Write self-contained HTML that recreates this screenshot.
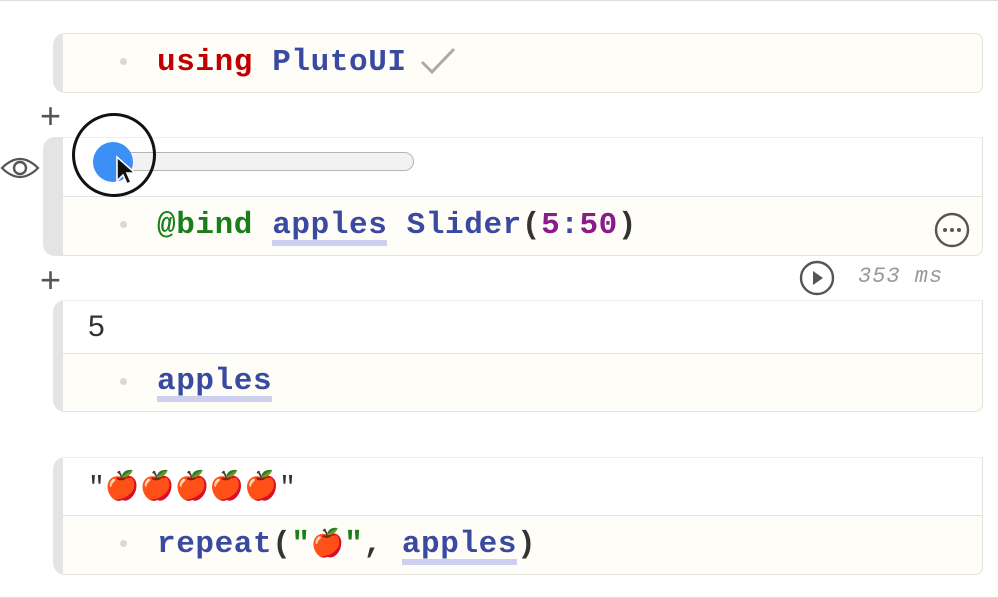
<!DOCTYPE html>
<html><head><style>
body{margin:0;width:998px;height:598px;background:#fff;position:relative;overflow:hidden;font-family:"Liberation Mono",monospace}
.abs{position:absolute}
.bar{position:absolute;background:#e4e4e4;border-radius:12px 0 0 12px}
.code{position:absolute;left:63px;width:920px;background:#fffdf8;border:1px solid #e4e2dc;border-left:none;border-radius:0 0 8px 0;box-sizing:border-box}
.ln{position:absolute;left:157px;font-size:31px;letter-spacing:0.6px;font-weight:bold;line-height:36px;white-space:pre;color:#3a4aa0}
.dot{position:absolute;left:120px;width:7px;height:7px;border-radius:50%;background:#d8d8d8}
.u{background:linear-gradient(#cdd0ee,#cdd0ee) no-repeat left bottom/100% 6px;padding-bottom:3px}
.plus{position:absolute;left:40px;font-family:"Liberation Sans",sans-serif;font-size:36px;color:#555;line-height:36px}
.out{position:absolute;left:63px;width:920px;box-sizing:border-box;border-right:1px solid #e4e2dc;border-top:1px solid #eee}
</style></head><body>
<div class="abs" style="left:0;top:0;width:998px;height:1px;background:#ddd"></div>
<div class="abs" style="left:0;top:597px;width:998px;height:1px;background:#ddd"></div>

<!-- cell1 -->
<div class="bar" style="left:53px;top:33px;width:14px;height:60px"></div>
<div class="code" style="top:33px;height:60px;border-top:1px solid #e4e2dc;border-radius:0 8px 8px 0"></div>
<div class="dot" style="top:58px"></div>
<div class="ln" style="top:45px"><span style="color:#c00000">using</span> PlutoUI</div>
<svg class="abs" style="left:420px;top:46px" width="36" height="30" viewBox="0 0 36 30"><path d="M2 16 L12 26 L34 3" fill="none" stroke="#aaa" stroke-width="3"/></svg>

<div class="plus" style="top:98px">+</div>

<!-- cell2 -->
<div class="bar" style="left:43px;top:137px;width:24px;height:119px"></div>
<div class="out" style="top:137px;height:59px;background:#fff"></div>
<div class="code" style="top:196px;height:60px;border-top:1px solid #e4e2dc"></div>
<div class="abs" style="left:118px;top:152px;width:294px;height:17px;border:1px solid #b5b5b5;border-radius:10px;background:#f2f2f2"></div>
<div class="abs" style="left:93px;top:142px;width:40px;height:40px;border-radius:50%;background:#3b8ff5"></div>
<div class="abs" style="left:72px;top:113px;width:84px;height:84px;border-radius:50%;border:3px solid #111;box-sizing:border-box"></div>
<svg class="abs" style="left:114px;top:155px" width="24" height="34" viewBox="0 0 24 34"><path d="M3 2 L3 26 L9 20 L13 29 L17 27 L13 18 L21 18 Z" fill="#111" stroke="#fff" stroke-width="1.6"/></svg>
<svg class="abs" style="left:0;top:153px" width="40" height="30" viewBox="0 0 40 30"><path d="M2 15 Q20 -3 38 15 Q20 33 2 15 Z" fill="none" stroke="#555" stroke-width="2.2"/><circle cx="20" cy="15" r="6" fill="none" stroke="#555" stroke-width="2.4"/></svg>
<div class="dot" style="top:221px"></div>
<div class="ln" style="top:208px"><span style="color:#1a7f1a">@bind</span> <span class="u">apples</span> Slider<span style="color:#333">(</span><span style="color:#8b1a8b">5</span>:<span style="color:#8b1a8b">50</span><span style="color:#333">)</span></div>
<svg class="abs" style="left:934px;top:212px" width="36" height="36" viewBox="0 0 36 36"><circle cx="18" cy="18" r="16" fill="none" stroke="#555" stroke-width="2.4"/><circle cx="11" cy="18" r="2" fill="#555"/><circle cx="18" cy="18" r="2" fill="#555"/><circle cx="25" cy="18" r="2" fill="#555"/></svg>

<div class="plus" style="top:262px">+</div>
<svg class="abs" style="left:799px;top:260px" width="36" height="36" viewBox="0 0 36 36"><circle cx="18" cy="18" r="16" fill="none" stroke="#555" stroke-width="2.4"/><path d="M14 11 L24 18 L14 25 Z" fill="#555"/></svg>
<div class="abs" style="left:858px;top:264px;font-size:22px;letter-spacing:1px;font-style:italic;color:#999;font-family:'Liberation Mono',monospace">353 ms</div>

<!-- cell3 -->
<div class="bar" style="left:53px;top:300px;width:14px;height:112px"></div>
<div class="out" style="top:300px;height:53px;background:#fff"></div>
<div class="code" style="top:353px;height:59px;border-top:1px solid #e4e2dc"></div>
<div class="abs" style="left:88px;top:310px;font-family:'Liberation Sans',sans-serif;font-size:30px;color:#333">5</div>
<div class="dot" style="top:378px"></div>
<div class="ln" style="top:364px"><span class="u">apples</span></div>

<!-- cell4 -->
<div class="bar" style="left:53px;top:457px;width:14px;height:118px"></div>
<div class="out" style="top:457px;height:58px;background:#fff"></div>
<div class="code" style="top:515px;height:60px;border-top:1px solid #e4e2dc"></div>
<div class="abs" style="left:88px;top:469px;font-size:28px;color:#333;white-space:pre;font-family:'Liberation Mono','Noto Color Emoji',monospace">"<span style="color:#d11">🍎🍎🍎🍎🍎</span>"</div>
<div class="dot" style="top:540px"></div>
<div class="ln" style="top:527px">repeat<span style="color:#333">(</span><span style="color:#1a7f1a">"</span><span style="color:#d11;font-size:27px;letter-spacing:0">🍎</span><span style="color:#1a7f1a">"</span><span style="color:#333">,</span> <span class="u">apples</span><span style="color:#333">)</span></div>
</body></html>
